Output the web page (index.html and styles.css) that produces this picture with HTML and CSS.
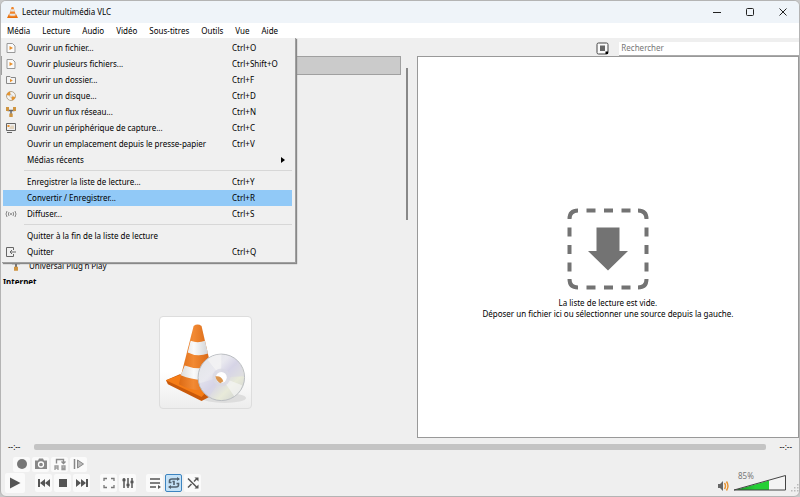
FILE: index.html
```html
<!doctype html>
<html lang="fr">
  <head>
    <meta charset="utf-8">
    <title>Lecteur multimédia VLC</title>
    <link rel="stylesheet" href="styles.css">
  </head>
  <body>
    <svg class="defs" width="0" height="0">
      <defs>
        <linearGradient id="orange" x1="0" x2="1">
          <stop offset="0" stop-color="#dc6a14"/>
          <stop offset=".4" stop-color="#f28a34"/>
          <stop offset="1" stop-color="#cf5c0a"/>
        </linearGradient>
        <linearGradient id="white" x1="0" x2="1">
          <stop offset="0" stop-color="#dcdcdc"/>
          <stop offset=".4" stop-color="#fafafa"/>
          <stop offset="1" stop-color="#c2c6ca"/>
        </linearGradient>
        <linearGradient id="green" x1="0" x2="1">
          <stop offset="0" stop-color="#168a20"/>
          <stop offset=".6" stop-color="#25cf35"/>
        </linearGradient>
        <linearGradient id="disc" x1="0" y1="0" x2="1" y2="1">
          <stop offset="0" stop-color="#e2e4e8"/>
          <stop offset=".35" stop-color="#e9e9ef"/>
          <stop offset=".5" stop-color="#d6d4e6"/>
          <stop offset=".7" stop-color="#e8ead9"/>
          <stop offset="1" stop-color="#c9ccd0"/>
        </linearGradient>
        <symbol id="file" viewBox="0 0 12 12">
          <path d="M2 1.500h5.500L10 4v6.500H2z" fill="#fafafa" stroke="#999"/>
          <path d="M4.500 4v4l3.500-2z" fill="#e8902c"/>
        </symbol>
        <symbol id="net" viewBox="0 0 12 12">
          <path d="M2.500 4.500h7M6 4.500v4" fill="none" stroke="#666" stroke-width="1.500"/>
          <path d="M1 1h3v4H1zM8 1h3v4H8zM4.300 7.500h3.400V11H4.300z" fill="#cf9440"/>
        </symbol>
      </defs>
    </svg>

    <div class="window">
      <header class="titlebar">
        <svg class="app-icon" viewBox="0 0 12 14">
          <path d="M2 9h8l2 4H0z" fill="#e8700c"/>
          <path d="M5 1h2l3 10q-4 2-8 0z" fill="#f0842a"/>
          <path d="M4.300 3.500h3.400l.8 2.500h-5zM3 8.300h6l.5 1.700q-3.500 1.200-7 0z" fill="#e6e6e6"/>
        </svg>
        <h1 class="title">Lecteur multimédia VLC</h1>
        <div class="win-buttons">
          <button type="button" aria-label="Réduire"><svg viewBox="0 0 10 10"><path d="M1 5.500h8"/></svg></button>
          <button type="button" aria-label="Agrandir"><svg viewBox="0 0 10 10"><rect x="1.500" y="1.500" width="7" height="7" rx="1"/></svg></button>
          <button type="button" aria-label="Fermer"><svg viewBox="0 0 10 10"><path d="M1.500 1.500l7 7M8.500 1.500l-7 7"/></svg></button>
        </div>
      </header>

      <nav class="menubar">
        <button type="button">Média</button>
        <button type="button">Lecture</button>
        <button type="button">Audio</button>
        <button type="button">Vidéo</button>
        <button type="button">Sous-titres</button>
        <button type="button">Outils</button>
        <button type="button">Vue</button>
        <button type="button">Aide</button>

        <div class="menu" role="menu">
          <button type="button" class="item" role="menuitem"><svg><use href="#file"/></svg><span>Ouvrir un fichier...</span><kbd>Ctrl+O</kbd></button>
          <button type="button" class="item" role="menuitem"><svg><use href="#file"/></svg><span>Ouvrir plusieurs fichiers...</span><kbd>Ctrl+Shift+O</kbd></button>
          <button type="button" class="item" role="menuitem">
            <svg viewBox="0 0 12 12"><path d="M1.500 9.500v-7H5l1 1h4.500v6z" fill="#f4f4f4" stroke="#888"/><path d="M5 4.800v3.400L7.800 6.500z" fill="#e8902c"/></svg>
            <span>Ouvrir un dossier...</span><kbd>Ctrl+F</kbd>
          </button>
          <button type="button" class="item" role="menuitem">
            <svg viewBox="0 0 12 12"><circle cx="6" cy="6" r="4.500" fill="#f3f3f3" stroke="#b5a58c"/><path d="M6 6L1.500 5A4.500 4.500 0 0 1 5 1.500zM6 6l4.500 1A4.500 4.500 0 0 1 7 10.500z" fill="#e3932f"/><circle cx="6" cy="6" r="1.300" fill="#fff" stroke="#aaa" stroke-width=".5"/></svg>
            <span>Ouvrir un disque...</span><kbd>Ctrl+D</kbd>
          </button>
          <button type="button" class="item" role="menuitem"><svg><use href="#net"/></svg><span>Ouvrir un flux réseau...</span><kbd>Ctrl+N</kbd></button>
          <button type="button" class="item" role="menuitem">
            <svg viewBox="0 0 12 12"><path d="M1.500 1.500h9v7h-9zM2 10.500h5" fill="#eee" stroke="#666"/><path d="M2.500 3h2v2h-2z" fill="#e8902c"/><path d="M6 3.500h3V7H4z" fill="#e2d3bd"/></svg>
            <span>Ouvrir un périphérique de capture...</span><kbd>Ctrl+C</kbd>
          </button>
          <button type="button" class="item" role="menuitem"><i></i><span>Ouvrir un emplacement depuis le presse-papier</span><kbd>Ctrl+V</kbd></button>
          <button type="button" class="item" role="menuitem"><i></i><span>Médias récents</span><svg class="submenu" viewBox="0 0 4 6"><path d="M0 0l4 3-4 3z"/></svg></button>
          <hr>
          <button type="button" class="item" role="menuitem"><i></i><span>Enregistrer la liste de lecture...</span><kbd>Ctrl+Y</kbd></button>
          <button type="button" class="item active" role="menuitem"><i></i><span>Convertir / Enregistrer...</span><kbd>Ctrl+R</kbd></button>
          <button type="button" class="item" role="menuitem">
            <svg viewBox="0 0 12 12"><path d="M4 4q-1.200 2 0 4M8 4q1.200 2 0 4M2 3q-2 3 0 6M10 3q2 3 0 6" fill="none" stroke="#888"/><circle cx="6" cy="6" r="1" fill="#888"/></svg>
            <span>Diffuser...</span><kbd>Ctrl+S</kbd>
          </button>
          <hr>
          <button type="button" class="item" role="menuitem"><i></i><span>Quitter à la fin de la liste de lecture</span></button>
          <button type="button" class="item" role="menuitem">
            <svg viewBox="0 0 12 12"><path d="M8.500 4V1.500h-7v9h7V8M11 6H5M7 4L5 6l2 2" fill="none" stroke="#666"/></svg>
            <span>Quitter</span><kbd>Ctrl+Q</kbd>
          </button>
        </div>
      </nav>

      <main class="main">
        <aside class="sidebar">
          <div class="sources">
            <div class="tree">
              <div class="selected"></div>
              <ul>
                <li><svg><use href="#net"/></svg>Universal Plug'n'Play</li>
              </ul>
              <h2>Internet</h2>
            </div>
            <div class="scrollbar"></div>
          </div>
          <div class="cover">
            <svg viewBox="0 0 92 92" role="img" aria-label="Pochette">
              <ellipse cx="65" cy="82" rx="22" ry="5" fill="#ddd"/>
              <path d="M6 64L20 58 55 70 51 80 42 85 8 68z" fill="#c9590a"/>
              <path d="M6 64L24 57 55 67 42 81z" fill="#f57c16"/>
              <path d="M34 9Q38 6 42 9L56 70Q39 79 19 68z" fill="url(#orange)"/>
              <path d="M31 24Q38 27 45.500 24L48.500 37Q38 41 28 36zM25 49Q38 54 51 50L54 62Q38 66 21 59z" fill="url(#white)"/>
              <circle cx="62" cy="61" r="23.500" fill="url(#disc)" stroke="#b9bcc0"/>
              <path d="M62 61L48 43Q54 38 62 38zM62 61L75 80Q81 76 83 69z" fill="#f5f5f5" opacity=".7"/>
              <path d="M62 61L79 46Q84 52 85 60zM62 61L40 67Q43 76 50 80z" fill="#d5d3e8" opacity=".5"/>
              <circle cx="62" cy="61" r="9" fill="#d9d9e3" opacity=".8"/>
              <circle cx="62" cy="61" r="5.500" fill="#fff"/>
              <path d="M56 60Q62 59 64 65L61 67Q57 65 56 60z" fill="#dc964e"/>
            </svg>
          </div>
        </aside>

        <section class="playlist">
          <div class="toolbar">
            <button type="button" class="view-btn" aria-label="Changer de vue">
              <svg viewBox="0 0 13 13"><rect x="1" y="1" width="11" height="11" rx="1.500" fill="#fafafa" stroke="#444"/><path d="M4 3.500h5v5.500H4z" fill="#666"/><path d="M9.500 9.500H12V12H9.500z" fill="#000"/></svg>
            </button>
            <input type="text" class="search" placeholder="Rechercher" aria-label="Rechercher">
          </div>
          <div class="drop-zone">
            <svg viewBox="0 0 82 82">
              <path d="M2.500 11Q2.500 2.500 11 2.500M71 2.500Q79.500 2.500 79.500 11M79.500 71Q79.500 79.500 71 79.500M11 79.500Q2.500 79.500 2.500 71M19.500 2.500h9M37 2.500h9M54.500 2.500h9M19.500 79.500h9M37 79.500h9M54.500 79.500h9M2.500 19.500v9M2.500 37v9M2.500 54.500v9M79.500 19.500v9M79.500 37v9M79.500 54.500v9" fill="none" stroke="#737373" stroke-width="4"/>
              <path d="M29.500 19.500h23v23.500H61L41 62.500 21 43h8.500z" fill="#737373"/>
            </svg>
            <p>La liste de lecture est vide.</p>
            <p>Déposer un fichier ici ou sélectionner une source depuis la gauche.</p>
          </div>
        </section>
      </main>

      <footer class="controls">
        <div class="seek">
          <span>--:--</span>
          <input type="range" min="0" max="100" value="0" disabled aria-label="Position">
          <span>--:--</span>
        </div>
        <div class="row advanced">
          <button type="button" aria-label="Enregistrer"><svg viewBox="0 0 14 14"><circle cx="7" cy="7" r="5" fill="#777"/></svg></button>
          <button type="button" aria-label="Capture"><svg viewBox="0 0 14 14"><path d="M1 3.500h3l1-2h4l1 2h3V12H1z" fill="#888"/><circle cx="7" cy="7.500" r="2.500" fill="none" stroke="#fff" stroke-width="1.300"/></svg></button>
          <button type="button" aria-label="Boucle A-B"><svg viewBox="0 0 14 14"><path d="M3.500 6.500V2.500h7V6M8.500 4.500l2 2 2-2" fill="none" stroke="#8b8b8b" stroke-width="1.400"/><path d="M2 13V9h3v4M2 11h3M9 9h3v3.500H9zM9 11h3" fill="none" stroke="#999" stroke-width="1.300"/></svg></button>
          <button type="button" aria-label="Image par image"><svg viewBox="0 0 14 14"><path d="M2.500 2v10" stroke="#888" stroke-width="1.500"/><path d="M5.500 3v8l6-4z" fill="#bbb" stroke="#888"/></svg></button>
        </div>
        <div class="row">
          <button type="button" class="play" aria-label="Lecture"><svg viewBox="0 0 14 14"><path d="M2 1.500v11l10.500-5.500z" fill="#555"/></svg></button>
          <div class="group">
            <button type="button" aria-label="Précédent"><svg viewBox="0 0 14 14"><path d="M1 3h2v8H1zM8 3v8L3 7zM13 3v8L8 7z" fill="#555"/></svg></button>
            <button type="button" aria-label="Arrêter"><svg viewBox="0 0 14 14"><path d="M3 3h8v8H3z" fill="#555"/></svg></button>
            <button type="button" aria-label="Suivant"><svg viewBox="0 0 14 14"><path d="M11 3h2v8h-2zM6 3v8l5-4zM1 3v8l5-4z" fill="#555"/></svg></button>
          </div>
          <div class="group">
            <button type="button" aria-label="Plein écran"><svg viewBox="0 0 14 14"><path d="M2 5V2.500h3M9 2.500h3V5M12 9v2.500H9M5 11.500H2V9" fill="none" stroke="#777" stroke-width="1.300"/></svg></button>
            <button type="button" aria-label="Réglages étendus"><svg viewBox="0 0 14 14"><path d="M3 2v10M7 2v10M11 2v10" stroke="#555" stroke-width="1.500"/><path d="M1.500 4h3M5.500 9h3M9.500 6h3" stroke="#555" stroke-width="2.500"/></svg></button>
          </div>
          <div class="group">
            <button type="button" aria-label="Liste de lecture"><svg viewBox="0 0 14 14"><path d="M2 3h10M2 7h10M2 11h6" stroke="#555" stroke-width="1.400"/><path d="M10 9v4l3-2z" fill="#555"/></svg></button>
            <button type="button" class="on" aria-label="Répéter"><svg viewBox="0 0 14 14"><path d="M12 3H5Q2.500 3 2.500 5V6.500H4.500M2 11h7Q11.500 11 11.500 9V7.500H9.500M5.500 5.500H7V9" fill="none" stroke="#52626f" stroke-width="1.600"/><path d="M10 1l3 2-3 2zM4 9l-3 2 3 2z" fill="#52626f"/></svg></button>
            <button type="button" aria-label="Aléatoire"><svg viewBox="0 0 14 14"><path d="M2 2.500l9 9M2 11.500L5.500 8M8 5.500l3-3" fill="none" stroke="#555" stroke-width="1.500"/><path d="M8.500 1.500h4v4zM12.500 8.500v4h-4z" fill="#555"/></svg></button>
          </div>
          <div class="volume">
            <svg class="speaker" viewBox="0 0 12 12"><path d="M1 4h2l3-3v10L3 8H1z" fill="#666"/><path d="M7.500 3q2 3 0 6M9.500 1.500q3 4.500 0 9" fill="none" stroke="#e8912d" stroke-width="1.400"/></svg>
            <div class="level">
              <span>85%</span>
              <svg viewBox="0 0 54 18"><path d="M2 16L52 2v14z" fill="#f4f4f4"/><path d="M2 16L36 6.500V16z" fill="url(#green)"/><path d="M1 16L52.500 1.500V16z" fill="none" stroke="#444"/></svg>
            </div>
            <svg class="grip" viewBox="0 0 8 8"><path d="M6 0h1.500v1.500H6zM6 3h1.500v1.500H6zM3 3h1.500v1.500H3zM6 6h1.500v1.500H6zM3 6h1.500v1.500H3zM0 6h1.500v1.500H0z" fill="#bbb"/></svg>
          </div>
        </div>
      </footer>
    </div>
  </body>
</html>
```
FILE: styles.css
```css
* {
  box-sizing: border-box;
}
body {
  margin: 0;
  background: #c8c8c8;
  color: #000;
  font: 8px/16px "Noto Sans", "Open Sans", sans-serif;
}
button {
  margin: 0;
  padding: 0;
  border: 0;
  background: none;
  color: inherit;
  font: inherit;
}
svg {
  display: block;
  flex: none;
}
.defs {
  position: absolute;
}
.window {
  display: flex;
  flex-direction: column;
  height: 100vh;
  border: 1px solid #b4b4b4;
  border-radius: 6px;
  background: #efefef;
  overflow: hidden;
}

/* title bar */
.titlebar {
  display: flex;
  align-items: center;
  height: 22px;
  padding-left: 6px;
  gap: 4px;
  background: #eff4f9;
}
.app-icon {
  width: 11px;
  height: 13px;
}
.title {
  flex: 1;
  margin: 0;
  font-size: 8px;
  font-weight: normal;
}
.win-buttons {
  display: flex;
}
.win-buttons button {
  display: flex;
  align-items: center;
  justify-content: center;
  width: 33px;
  height: 22px;
}
.win-buttons svg {
  width: 10px;
  height: 10px;
  fill: none;
  stroke: #222;
}

/* menu bar */
.menubar {
  position: relative;
  display: flex;
  height: 15px;
  padding-left: 6px;
  gap: 12px;
  background: #fff;
}
.menu {
  position: absolute;
  z-index: 1;
  top: 15px;
  left: 1px;
  width: 294px;
  padding: 2px 3px 2px 1px;
  border-right: 1px solid #a0a0a0;
  border-bottom: 1px solid #a0a0a0;
  background: #f0f0f0;
  box-shadow: 1px 1px 1px #888;
}
.item {
  display: flex;
  align-items: center;
  width: 100%;
  height: 16px;
  padding-left: 2px;
  text-align: left;
}
.item svg,
.item i {
  width: 12px;
  height: 12px;
}
.item span {
  flex: 1;
  padding-left: 10px;
}
.item kbd {
  width: 60px;
  font: inherit;
}
.item .submenu {
  width: 4px;
  height: 6px;
  margin-right: 7px;
}
.item.active {
  background: #91c9f7;
}
.menu hr {
  height: 1px;
  margin: 2px 0 3px 21px;
  border: 0;
  background: #d7d7d7;
}

/* sources and playlist */
.main {
  display: flex;
  flex: 1;
  min-height: 0;
}
.sidebar {
  display: flex;
  flex-direction: column;
  width: 52.1%;
}
.sources {
  display: flex;
  height: 61.5%;
  padding: 18px 9px 0 0;
}
.tree {
  display: flex;
  flex: 1;
  flex-direction: column;
  min-height: 0;
  overflow: hidden;
}
.tree ul {
  margin: auto 0 0;
  padding: 0 0 0 8px;
  list-style: none;
}
.tree li {
  display: flex;
  gap: 6px;
}
.tree li svg {
  width: 14px;
  height: 14px;
}
.tree h2 {
  height: 10px;
  margin: 0;
  padding-left: 2px;
  overflow: hidden;
  font-size: 8px;
}
.selected {
  height: 19px;
  border: 1px solid #a0a0a0;
  background: #cbcbcb;
}
.scrollbar {
  width: 2px;
  height: 152px;
  margin: 12px 0 0 5px;
  background: #888;
}
.cover {
  display: flex;
  flex: 1;
  align-items: center;
  justify-content: center;
  padding: 2px 6px 0 0;
}
.cover svg {
  width: 93px;
  height: 93px;
  border: 1px solid #ddd;
  border-radius: 4px;
  background: linear-gradient(#fff 60%, #ededed);
}
.playlist {
  display: flex;
  flex: 1;
  flex-direction: column;
}
.toolbar {
  display: flex;
  align-items: center;
  justify-content: flex-end;
  height: 18px;
  padding-top: 3px;
  gap: 10px;
}
.view-btn svg {
  width: 13px;
  height: 13px;
}
.search {
  width: 47%;
  height: 14px;
  padding: 0 2px;
  border: 0;
  border-bottom: 1px solid #aaa;
  background: #fff;
  font: inherit;
}
.search::placeholder {
  color: #777;
}
.drop-zone {
  display: flex;
  flex: 1;
  flex-direction: column;
  align-items: center;
  justify-content: center;
  padding-top: 32px;
  border: 1px solid #999;
  background: #fff;
  line-height: 11px;
}
.drop-zone svg {
  width: 82px;
  height: 82px;
  margin-bottom: 7px;
}
.drop-zone p {
  margin: 0;
}

/* controls */
.controls {
  height: 58px;
}
.seek {
  display: flex;
  align-items: center;
  height: 18px;
  padding: 0 7px;
  gap: 14px;
}
.seek input {
  flex: 1;
  height: 6px;
  margin: 0;
  border-radius: 2px;
  background: #c4c4c4;
  appearance: none;
}
.seek input::-webkit-slider-thumb {
  appearance: none;
  width: 0;
}
.row {
  display: flex;
  align-items: center;
  height: 22px;
  padding-left: 4px;
  gap: 10px;
}
.row button {
  display: flex;
  align-items: center;
  justify-content: center;
  width: 17px;
  height: 18px;
  border-radius: 2px;
  background: #fafafa;
}
.row svg {
  width: 14px;
  height: 14px;
}
.row .play {
  width: 20px;
  height: 20px;
}
.row .on {
  border: 1px solid #3d84c0;
  background: #c5e2f7;
}
.group {
  display: flex;
  gap: 2px;
}
.advanced {
  height: 16px;
  padding-left: 12px;
  gap: 2px;
}
.advanced button {
  height: 15px;
}
.volume {
  display: flex;
  align-items: flex-end;
  margin-left: auto;
  gap: 4px;
}
.volume .speaker {
  width: 12px;
  height: 12px;
}
.level {
  position: relative;
}
.level span {
  position: absolute;
  top: -6px;
  left: 5px;
  color: #777;
}
.level svg {
  width: 54px;
  height: 18px;
}
.volume .grip {
  width: 8px;
  height: 8px;
}
```
